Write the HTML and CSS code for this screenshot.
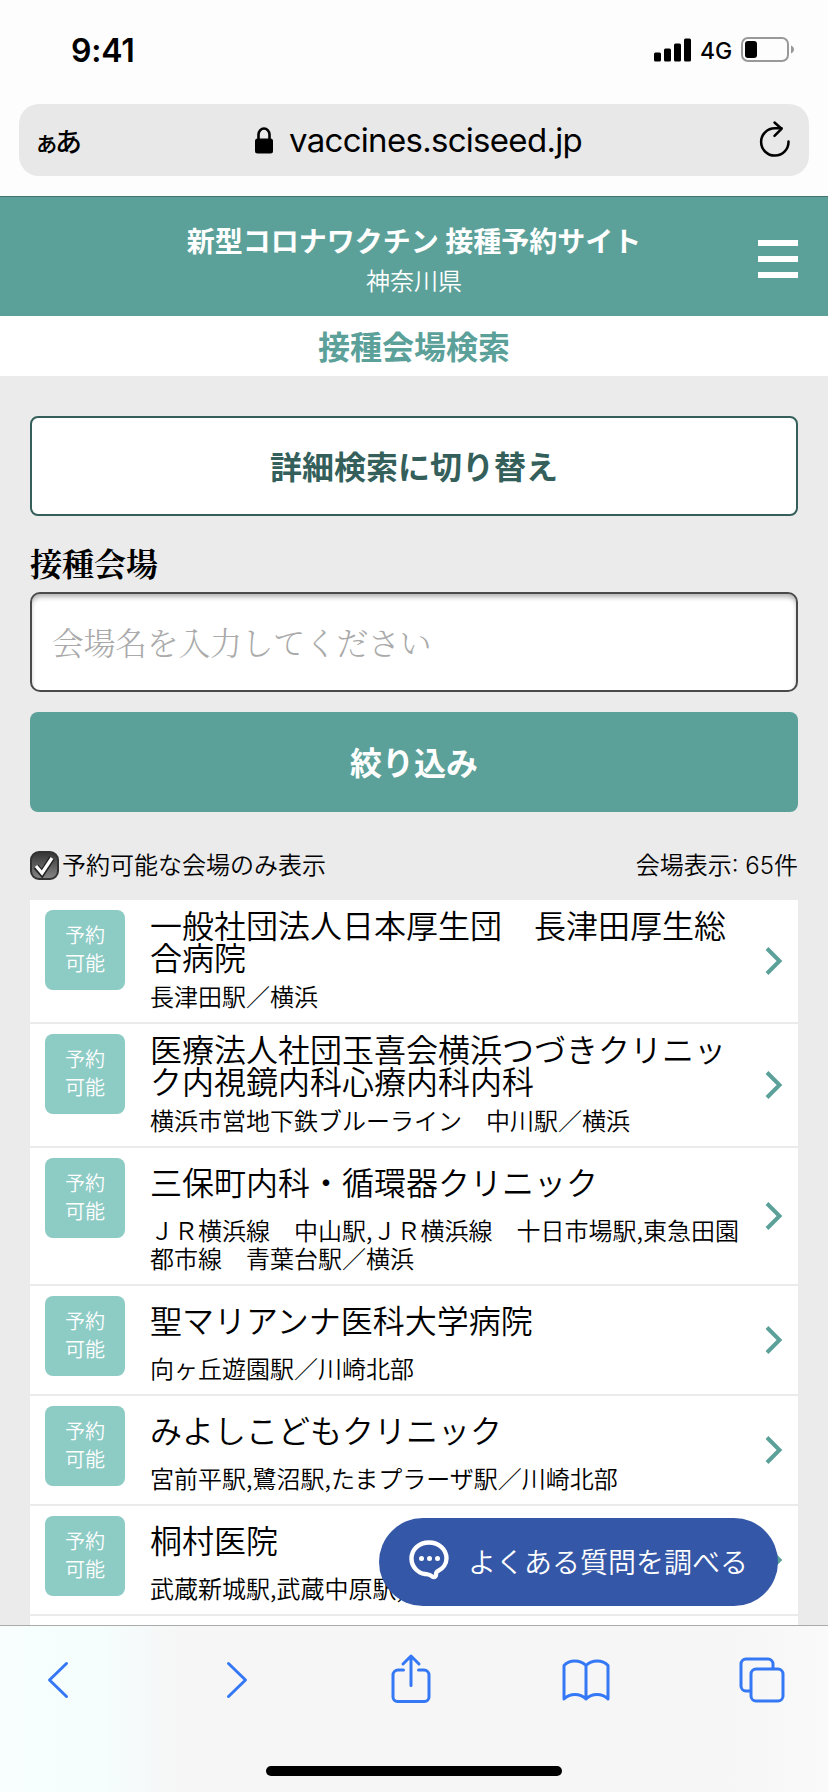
FILE: index.html
```html
<!DOCTYPE html>
<html lang="ja">
<head>
  <meta charset="UTF-8" />
  <title>接種会場検索</title>
  <meta name="viewport" content="width=device-width, initial-scale=1.0" />
  <link rel="stylesheet" href="styles.css">
</head>
<body>

  <div class="status-bar">
    <div class="time">9:41</div>
    <div class="status-icons">
      <svg class="signal" width="37" height="24" viewBox="0 0 37 24">
        <rect x="0" y="14.5" width="7" height="9" rx="1.5" />
        <rect x="10" y="10.5" width="7" height="13" rx="1.5" />
        <rect x="20" y="5.5" width="7" height="18" rx="1.5" />
        <rect x="30" y="0.5" width="7" height="23" rx="1.5" />
      </svg>
      <span class="network">4G</span>
      <svg class="battery" width="53" height="26" viewBox="0 0 53 26">
        <rect x="1" y="1" width="46" height="23" rx="6" fill="none" stroke="#999" stroke-width="2" />
        <rect x="4" y="4" width="12" height="17" rx="3" />
        <path d="M50 8.5c4 1.5 4 6.500 0 8z" fill="#999" />
      </svg>
    </div>
  </div>

  <div class="url-bar">
    <div class="text-size"><span>ぁ</span><span>あ</span></div>
    <div class="url">
      <svg width="18" height="27" viewBox="0 0 18 27">
        <rect x="0" y="11.500" width="18" height="15" rx="2.500" />
        <path d="M3.500 13V7.500a5.500 6 0 0 1 11 0V13" fill="none" stroke="#000" stroke-width="2.600" />
      </svg>
      <span>vaccines.sciseed.jp</span>
    </div>
    <svg class="reload" width="32" height="38" viewBox="0 0 32 38" fill="none" stroke="#000" stroke-width="2.500" stroke-linecap="round" stroke-linejoin="round">
      <path d="M29.500 21.500A13.700 13.700 0 1 1 15.800 8.200H22.500" />
      <path d="M15.500 2.500l7 6.300-7 7" />
    </svg>
  </div>

  <main class="page">
    <header class="site-header">
      <div class="site-name">
        <h1>新型コロナワクチン 接種予約サイト</h1>
        <p>神奈川県</p>
      </div>
      <div class="menu">
        <span></span>
        <span></span>
        <span></span>
      </div>
    </header>

    <h2 class="page-title">接種会場検索</h2>

    <div class="content">
      <div class="btn btn-outline">詳細検索に切り替え</div>

      <div class="label">接種会場</div>
      <div class="input">会場名を入力してください</div>
      <div class="btn btn-main">絞り込み</div>

      <div class="filter">
        <div class="check">
          <svg width="29" height="29" viewBox="0 0 29 29">
            <defs>
              <linearGradient id="checkFill" x1="0" y1="0" x2="0" y2="1">
                <stop offset="0" stop-color="#333" />
                <stop offset="1" stop-color="#888" />
              </linearGradient>
            </defs>
            <rect x="1" y="1" width="27" height="27" rx="8" fill="url(#checkFill)" stroke="#333" stroke-width="2" />
            <path d="M6 15.500l6 7L22 7" fill="none" stroke="#222" stroke-width="6" />
            <path d="M6 15l6 7L22 7" fill="none" stroke="#fff" stroke-width="3.200" />
          </svg>
          <span>予約可能な会場のみ表示</span>
        </div>
        <div class="count">会場表示: 65件</div>
      </div>

      <div class="list">
        <div class="item">
          <div class="badge">予約<br>可能</div>
          <div class="info">
            <div class="name">一般社団法人日本厚生団　長津田厚生総合病院</div>
            <div class="station">長津田駅／横浜</div>
          </div>
          <svg class="arrow" width="18" height="30" viewBox="0 0 18 30"><path d="M2 2.500L14.500 15 2 27.500" /></svg>
        </div>
        <div class="item">
          <div class="badge">予約<br>可能</div>
          <div class="info">
            <div class="name">医療法人社団玉喜会横浜つづきクリニック内視鏡内科心療内科内科</div>
            <div class="station">横浜市営地下鉄ブルーライン　中川駅／横浜</div>
          </div>
          <svg class="arrow" width="18" height="30" viewBox="0 0 18 30"><path d="M2 2.500L14.500 15 2 27.500" /></svg>
        </div>
        <div class="item">
          <div class="badge">予約<br>可能</div>
          <div class="info">
            <div class="name">三保町内科・循環器クリニック</div>
            <div class="station">ＪＲ横浜線　中山駅,ＪＲ横浜線　十日市場駅,東急田園都市線　青葉台駅／横浜</div>
          </div>
          <svg class="arrow" width="18" height="30" viewBox="0 0 18 30"><path d="M2 2.500L14.500 15 2 27.500" /></svg>
        </div>
        <div class="item">
          <div class="badge">予約<br>可能</div>
          <div class="info">
            <div class="name">聖マリアンナ医科大学病院</div>
            <div class="station">向ヶ丘遊園駅／川崎北部</div>
          </div>
          <svg class="arrow" width="18" height="30" viewBox="0 0 18 30"><path d="M2 2.500L14.500 15 2 27.500" /></svg>
        </div>
        <div class="item">
          <div class="badge">予約<br>可能</div>
          <div class="info">
            <div class="name">みよしこどもクリニック</div>
            <div class="station">宮前平駅,鷺沼駅,たまプラーザ駅／川崎北部</div>
          </div>
          <svg class="arrow" width="18" height="30" viewBox="0 0 18 30"><path d="M2 2.500L14.500 15 2 27.500" /></svg>
        </div>
        <div class="item">
          <div class="badge">予約<br>可能</div>
          <div class="info">
            <div class="name">桐村医院</div>
            <div class="station">武蔵新城駅,武蔵中原駅,</div>
          </div>
          <svg class="arrow" width="18" height="30" viewBox="0 0 18 30"><path d="M2 2.500L14.500 15 2 27.500" /></svg>
        </div>
        <div class="item item-next"></div>
      </div>
    </div>

    <div class="faq">
      <svg width="40" height="40" viewBox="0 0 40 40">
        <path d="M20 2.500C10 2.500 2.500 9.500 2.500 18.500c0 8 6 14.500 13.500 15.500 3.500.500 5 .500 6.500 2 2 2 4.500 1 4.500-1.500 0-2 0-2.500 2-3.500 5-2.500 8.500-7.500 8.500-12.500C37.500 9.500 30 2.500 20 2.500z" fill="none" stroke="#fff" stroke-width="4.400" stroke-linejoin="round" />
        <circle cx="12.500" cy="18.500" r="2.500" fill="#fff" />
        <circle cx="20.500" cy="18.500" r="2.500" fill="#fff" />
        <circle cx="28.500" cy="18.500" r="2.500" fill="#fff" />
      </svg>
      <span>よくある質問を調べる</span>
    </div>
  </main>

  <nav class="toolbar">
    <div class="tools">
      <svg class="back" width="22" height="38" viewBox="0 0 22 38"><path d="M19.500 2.500L2.500 19l17 16.500" /></svg>
      <svg class="forward" width="22" height="38" viewBox="0 0 22 38"><path d="M2.500 2.500L19.500 19l-17 16.500" /></svg>
      <svg class="share" width="40" height="50" viewBox="0 0 40 50">
        <path d="M12.500 17H7a5 5 0 0 0-5 5v22a4.500 4.500 0 0 0 4.500 4.500h27A4.500 4.500 0 0 0 38 44V22a5 5 0 0 0-5-5h-5.500" />
        <path d="M20 32.500V3M12 11L20 3l8 8" />
      </svg>
      <svg class="book" width="48" height="42" viewBox="0 0 48 42">
        <path d="M24 6.500C18 .500 7.500.500 2 6.500V40c6-6 16-6 22 0 6-6 16-6 22 0V6.500C40.500.500 30 .500 24 6.500zM24 6.500V40" />
      </svg>
      <svg width="46" height="46" viewBox="0 0 46 46">
        <path d="M11.500 34H7a5 5 0 0 1-5-5V7a5 5 0 0 1 5-5h22a5 5 0 0 1 5 5v4.500" />
        <rect x="12" y="12" width="32" height="32" rx="5" />
      </svg>
    </div>
    <div class="home-bar"></div>
  </nav>

</body>
</html>
```
FILE: styles.css
```css
* {
  box-sizing: border-box;
}

body {
  margin: 0;
  width: 828px;
  height: 1792px;
  overflow: hidden;
  display: flex;
  flex-direction: column;
  background-color: #fdfdfd;
  color: #000;
  font-family: 'Noto Sans CJK JP', sans-serif;
  font-weight: 350;
}

h1, h2, p {
  margin: 0;
}

svg {
  display: block;
  flex: none;
}

/* Barra de estado */
.status-bar {
  height: 104px;
  padding: 0 34px 4px 71px;
  display: flex;
  justify-content: space-between;
  align-items: center;
  font-family: Inter, sans-serif;
}

.time {
  font-size: 32px;
  font-weight: 600;
  letter-spacing: -0.2px;
}

.status-icons {
  display: flex;
  align-items: center;
}

.network {
  width: 33px;
  margin: 2px 8px 0 9px;
  font-size: 23px;
  font-weight: 500;
}

.url-bar {
  height: 72px;
  margin: 0 19px 20px;
  padding: 0 18px 0 15px;
  border-radius: 20px;
  background-color: #e8e8e8;
  display: flex;
  justify-content: space-between;
  align-items: center;
  flex: none;
}

.text-size {
  width: 54px;
  display: flex;
  align-items: baseline;
  font-weight: 500;
  font-size: 27px;
  letter-spacing: -4px;
}

.text-size span:first-child {
  font-size: 25px;
}

.url {
  display: flex;
  align-items: center;
  gap: 16px;
  margin-right: 10px;
  font-family: Inter, sans-serif;
  font-size: 33px;
  font-weight: 400;
  letter-spacing: -0.7px;
}

.reload {
  margin-top: -2px;
}

/* Página */
.page {
  flex: 1;
  min-height: 0;
  overflow: hidden;
  position: relative;
  background-color: #ebebeb;
}

.site-header {
  height: 120px;
  padding: 7px 30px 0;
  border-top: 1px solid #44726d;
  background-color: #5ba199;
  color: #fff;
  display: grid;
  grid-template-columns: 40px 1fr 40px;
  align-items: center;
  text-align: center;
}

.site-name {
  grid-column: 2;
}

.site-name h1 {
  font-size: 28px;
  line-height: 40px;
  font-weight: 700;
}

.site-name p {
  font-size: 24px;
  line-height: 40px;
}

.menu {
  padding-bottom: 2px;
  display: flex;
  flex-direction: column;
  gap: 10px;
}

.menu span {
  height: 6px;
  background-color: #fff;
}

.page-title {
  height: 60px;
  background-color: #fff;
  color: #5ba199;
  font-size: 32px;
  line-height: 58px;
  font-weight: 700;
  text-align: center;
}

.content {
  padding: 40px 30px 0;
}

.btn {
  height: 100px;
  border-radius: 8px;
  font-size: 32px;
  line-height: 98px;
  font-weight: 700;
  text-align: center;
}

.btn-outline {
  border: 2px solid #345f5b;
  background-color: #fff;
  color: #345f5b;
  line-height: 94px;
}

.btn-main {
  background-color: #5ba199;
  color: #fff;
}

.label {
  margin-top: 24px;
  font-family: 'Noto Serif CJK JP', 'Noto Sans CJK JP', serif;
  font-size: 32px;
  line-height: 44px;
  font-weight: 700;
}

.input {
  height: 100px;
  margin: 8px 0 20px;
  padding: 0 20px;
  border: 2px solid #4a4a4a;
  border-radius: 10px;
  background-color: #fff;
  box-shadow: inset 0 4px 5px -1px rgba(0, 0, 0, 0.3);
  color: #aaa;
  font-family: 'Noto Serif CJK JP', 'Noto Sans CJK JP', serif;
  font-size: 32px;
  line-height: 94px;
  letter-spacing: -0.4px;
}

.filter {
  height: 88px;
  padding-top: 18px;
  display: flex;
  justify-content: space-between;
  align-items: center;
  font-size: 24px;
}

.check {
  display: flex;
  align-items: center;
  gap: 3px;
}

.check span,
.count {
  margin-top: -3px;
}

.count {
  font-family: Inter, 'Noto Sans CJK JP', sans-serif;
}

/* Listado de centros */
.item {
  display: flex;
  padding: 10px 15px 11px;
  border-bottom: 2px solid #ebebeb;
  background-color: #fff;
}

.item-next {
  height: 110px;
}

.badge {
  width: 80px;
  height: 80px;
  padding-top: 11px;
  border-radius: 8px;
  background-color: #8dcbc5;
  color: #fff;
  font-size: 20px;
  line-height: 28px;
  text-align: center;
}

.info {
  width: 592px;
  margin: -2px 0 0 25px;
}

.name {
  min-height: 50px;
  display: flex;
  align-items: center;
  font-size: 32px;
  line-height: 32px;
}

.station {
  margin-top: 10px;
  padding-bottom: 1px;
  font-size: 24px;
  line-height: 28px;
}

.arrow {
  margin-left: auto;
  align-self: center;
}

.arrow path {
  fill: none;
  stroke: #5ba199;
  stroke-width: 4;
}

/* Botón flotante de preguntas frecuentes */
.faq {
  position: absolute;
  right: 50px;
  bottom: 19px;
  width: 399px;
  height: 88px;
  padding-left: 30px;
  border-radius: 44px;
  background-color: #3557a7;
  color: #fff;
  display: flex;
  align-items: center;
  gap: 19px;
  font-size: 28px;
}

.faq svg {
  margin-top: -4px;
}

.faq span {
  margin-top: -2px;
}

.toolbar {
  height: 167px;
  border-top: 1px solid #a9acab;
  background: linear-gradient(90deg, #f8fefe 0, #f5fdfd 100px, #f6f6f6 180px, #f6f6f6 720px, #fafafa 828px);
  flex: none;
}

.tools {
  height: 108px;
  padding-left: 47px;
  display: flex;
  align-items: center;
}

.tools .back {
  margin-right: 157px;
}

.tools .forward {
  margin-right: 143px;
}

.tools .share {
  margin: -5px 131px 0 0;
}

.tools .book {
  margin-right: 129px;
}

.tools path,
.tools rect {
  fill: none;
  stroke: #3478f6;
  stroke-width: 3;
  stroke-linecap: round;
  stroke-linejoin: round;
}

.home-bar {
  width: 296px;
  height: 10px;
  margin: 32px auto 0;
  border-radius: 5px;
  background-color: #000;
}
```
